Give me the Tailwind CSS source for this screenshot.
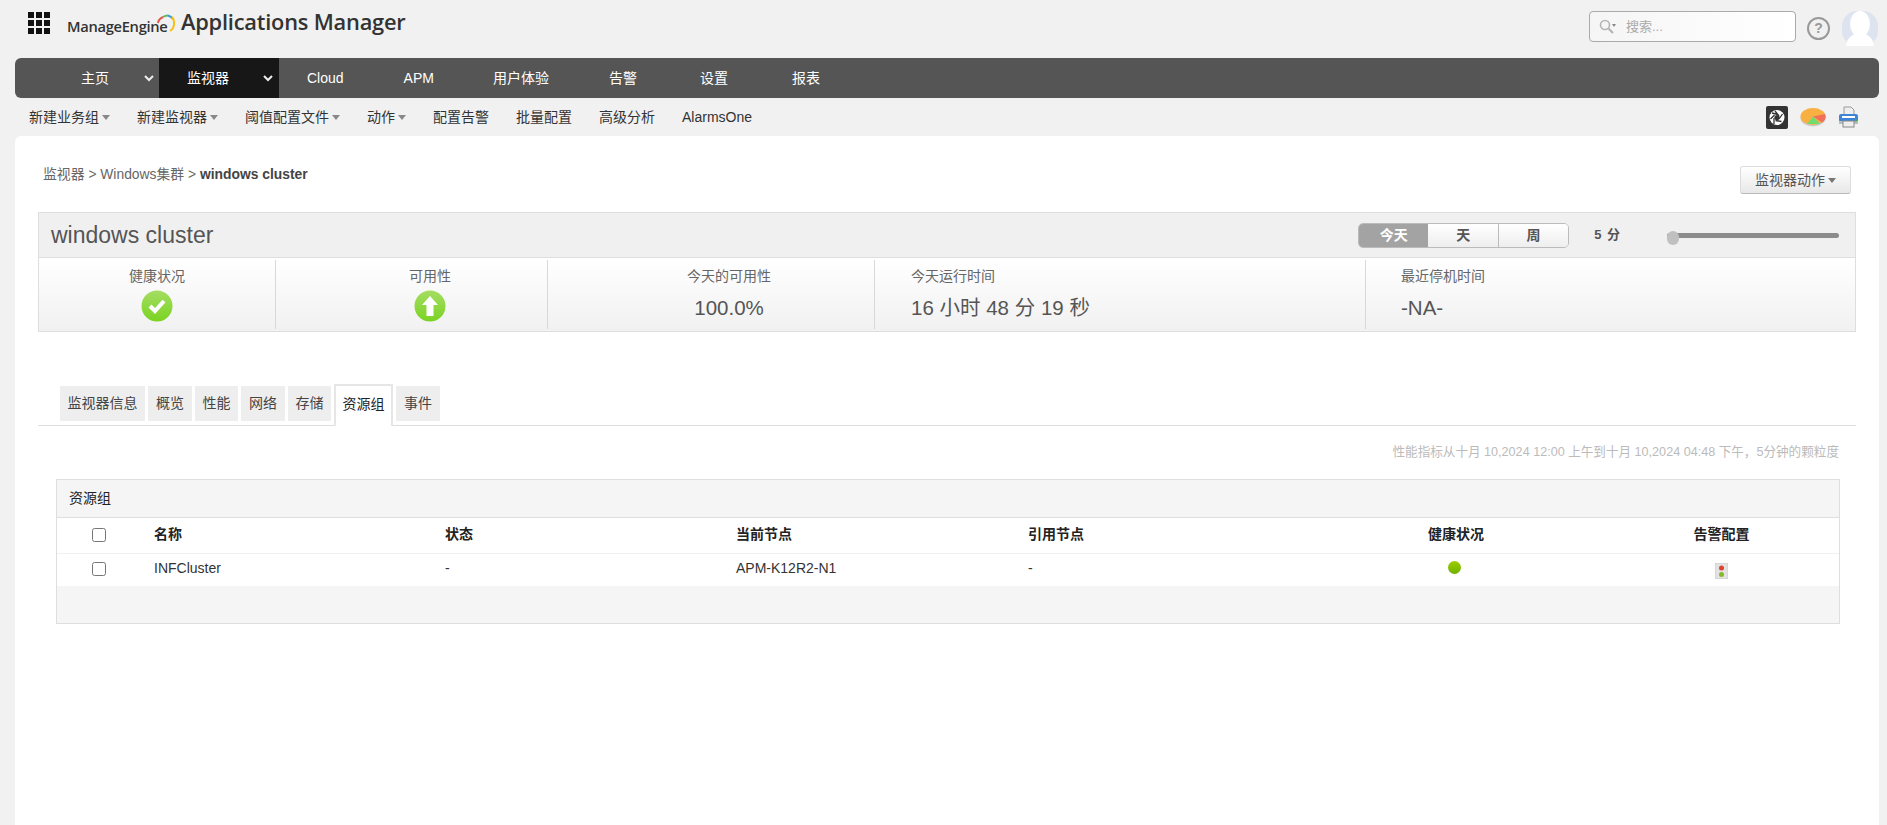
<!DOCTYPE html>
<html lang="zh-CN">
<head>
  <meta charset="UTF-8" />
  <title>Applications Manager</title>
  <script src="https://cdn.jsdelivr.net/npm/@tailwindcss/browser@4"></script>
</head>
<body class="bg-[#f1f1f1] h-[825px] overflow-hidden text-[14px] text-[#444] font-['Liberation_Sans','Noto_Sans_CJK_SC',sans-serif]">

  <!-- top bar -->
  <header class="h-[58px] flex items-start pl-[28px] pr-[9px]">
    <svg class="mt-[12px] w-[22px] h-[22px] shrink-0" viewBox="0 0 22 22" fill="#111">
      <rect x="0" y="0" width="6" height="6" /><rect x="8" y="0" width="6" height="6" /><rect x="16" y="0" width="6" height="6" />
      <rect x="0" y="8" width="6" height="6" /><rect x="8" y="8" width="6" height="6" /><rect x="16" y="8" width="6" height="6" />
      <rect x="0" y="16" width="6" height="6" /><rect x="8" y="16" width="6" height="6" /><rect x="16" y="16" width="6" height="6" />
    </svg>
    <div class="ml-[17px] mt-[12px] flex items-end h-[24px] relative">
      <span class="text-[14.7px] leading-[20px] text-[#333] font-semibold font-['Open_Sans',sans-serif] w-[114px] tracking-[-0.3px]">ManageEngine</span>
      <svg class="absolute left-[90px] top-[2px] w-[20px] h-[20px]" viewBox="0 0 20 20" fill="none" stroke-width="2">
        <path d="M1 9 A9 8 0 0 1 6 3" stroke="#e05a4a" />
        <path d="M6 3 A9 8 0 0 1 11 1.500" stroke="#5cb85c" />
        <path d="M11 1.500 A9 8 0 0 1 16 5" stroke="#3b9bd6" />
        <path d="M15 3 A8 9 0 0 1 13 17" stroke="#f2c21a" />
      </svg>
      <span class="text-[21.8px] leading-[28px] text-[#333] font-semibold font-['Open_Sans',sans-serif] tracking-[-0.2px]">Applications Manager</span>
    </div>
    <div class="ml-auto mt-[11px] flex items-start">
      <div class="w-[207px] h-[31px] border border-[#aaa] rounded-[4px] bg-gradient-to-r from-[#f5f5f5] to-white flex items-center pl-[9px] text-[13px] text-[#aaa]">
        <svg class="w-[18px] h-[16px] mr-[9px]" viewBox="0 0 18 16" fill="none" stroke="#b5b5b5">
          <circle cx="6" cy="6" r="4.500" stroke-width="1.600" />
          <path d="M9.500 9.500 L14 14" stroke-width="2.200" />
          <path d="M13 5 h4 l-2 3 z" fill="#888" stroke="none" />
        </svg>
        搜索...
      </div>
      <div class="ml-[11px] mt-[6px] w-[23px] h-[23px] rounded-full border-2 border-[#999] flex items-center justify-center text-[14px] font-bold text-[#999]">?</div>
      <svg class="ml-[12px] w-[36px] h-[35px]" viewBox="0 0 36 35">
        <rect width="36" height="35" rx="15" fill="#dde3ef" />
        <ellipse cx="18" cy="13" rx="10" ry="13" fill="#fff" />
        <path d="M4 35 C5 25 12 24 14 22 H22 C24 24 31 25 32 35 Z" fill="#fff" />
      </svg>
    </div>
  </header>

  <!-- main nav -->
  <nav class="ml-[15px] mr-[8px] h-[40px] bg-[#555] rounded-[6px] flex items-center text-white overflow-hidden">
    <a class="w-[144px] h-full flex items-center pl-[66px]">主页
      <svg class="ml-[35px] w-[10px] h-[7px]" viewBox="0 0 10 7" fill="none" stroke="#eee" stroke-width="2"><path d="M1 1 L5 5 L9 1" /></svg>
    </a>
    <a class="w-[120px] h-full bg-[#171717] flex items-center pl-[28px]">监视器
      <svg class="ml-[34px] w-[10px] h-[7px]" viewBox="0 0 10 7" fill="none" stroke="#eee" stroke-width="2"><path d="M1 1 L5 5 L9 1" /></svg>
    </a>
    <a class="pl-[28px] pr-[30px]">Cloud</a>
    <a class="pl-[30px] pr-[29px]">APM</a>
    <a class="pl-[30px] pr-[29px]">用户体验</a>
    <a class="px-[31px]">告警</a>
    <a class="px-[32px]">设置</a>
    <a class="px-[32px]">报表</a>
  </nav>

  <!-- sub nav -->
  <div class="h-[38px] pl-[29px] pr-[28px] flex items-center gap-[27px] text-[#333]">
    <a class="flex items-center">新建业务组<i class="ml-[3px] mt-[1px] border-x-[4px] border-x-transparent border-t-[5px] border-t-[#888]"></i></a>
    <a class="flex items-center">新建监视器<i class="ml-[3px] mt-[1px] border-x-[4px] border-x-transparent border-t-[5px] border-t-[#888]"></i></a>
    <a class="flex items-center">阈值配置文件<i class="ml-[3px] mt-[1px] border-x-[4px] border-x-transparent border-t-[5px] border-t-[#888]"></i></a>
    <a class="flex items-center">动作<i class="ml-[3px] mt-[1px] border-x-[4px] border-x-transparent border-t-[5px] border-t-[#888]"></i></a>
    <a>配置告警</a>
    <a>批量配置</a>
    <a>高级分析</a>
    <a>AlarmsOne</a>
    <div class="ml-auto flex items-center gap-[12px]">
      <svg class="w-[22px] h-[23px]" viewBox="0 0 22 23">
        <rect width="22" height="23" rx="2" fill="#333" />
        <circle cx="11" cy="11.500" r="7.500" fill="#fff" />
        <circle cx="11" cy="11.500" r="2.600" fill="#333" />
        <path d="M9 5 L13 10 M16.500 8 L13 13 M15.500 15.500 L9.500 14.500 M8 18 L8 12 M4.500 13 L8.500 9 M6 7 L12 8.500" stroke="#333" stroke-width="1.300" />
      </svg>
      <svg class="w-[26px] h-[20px]" viewBox="0 0 26 20">
        <ellipse cx="13" cy="11" rx="12.500" ry="8.500" fill="#ccc" />
        <ellipse cx="13" cy="9.500" rx="12.500" ry="8.500" fill="#f9b042" />
        <path d="M13 9.500 L25 7 A12.500 8.500 0 0 1 22 15.500 Z" fill="#f0705a" />
        <path d="M13 9.500 L20 17 L7 17 Z" fill="#6fdc6f" />
      </svg>
      <svg class="w-[21px] h-[22px]" viewBox="0 0 21 22">
        <path d="M6 1 H13 L16 4 V10 H6 Z" fill="#eee" stroke="#999" />
        <rect x="1" y="8" width="19" height="8" rx="2" fill="#3d84d6" />
        <rect x="4" y="10" width="13" height="2" fill="#fff" />
        <rect x="1" y="15" width="19" height="3" fill="#bbb" />
        <rect x="5" y="15" width="11" height="6" fill="#eee" stroke="#888" />
        <circle cx="18" cy="14.500" r="1.200" fill="#4caf50" />
      </svg>
    </div>
  </div>

  <!-- content card -->
  <main class="ml-[15px] mr-[8px] h-[689px] bg-white rounded-t-[6px] px-[23px]">
    <div class="h-[76px] flex items-start justify-between">
      <p class="mt-[28px] ml-[5px] text-[13.85px] text-[#666]">监视器 &gt; Windows集群 &gt; <b class="text-[#444]">windows cluster</b></p>
      <button class="mt-[30px] mr-[5px] w-[111px] h-[28px] border border-[#ddd] border-b-[#bbb] rounded-[3px] bg-gradient-to-b from-white to-[#e8e8e8] flex items-center justify-center text-[#555]">监视器动作<i class="ml-[3px] border-x-[4px] border-x-transparent border-t-[5px] border-t-[#777]"></i></button>
    </div>

    <!-- summary panel -->
    <section class="border border-[#dedede] h-[120px]">
      <div class="h-[45px] bg-[#f0f0f0] border-b border-[#dedede] flex items-center pl-[12px] pr-[16px]">
        <h1 class="text-[23px] text-[#555]">windows cluster</h1>
        <div class="ml-auto w-[211px] h-[25px] flex border border-[#bbb] rounded-[5px] overflow-hidden font-bold text-[#555]">
          <span class="flex-1 bg-[#a3a3a3] text-white flex items-center justify-center">今天</span>
          <span class="flex-1 bg-gradient-to-b from-white to-[#eee] border-r border-[#bbb] flex items-center justify-center">天</span>
          <span class="flex-1 bg-gradient-to-b from-white to-[#eee] flex items-center justify-center">周</span>
        </div>
        <span class="ml-[25px] text-[13px] font-bold text-[#555] tracking-[1px]">5 分</span>
        <div class="ml-[46px] relative w-[172px] h-[5px] bg-[#8c8c8c] rounded-full">
          <i class="absolute left-0 top-[-2px] w-[12px] h-[14px] rounded-full bg-[#c0c0c0]"></i>
        </div>
      </div>
      <div class="h-[73px] py-[2px] grid grid-cols-[237px_272px_327px_491px_1fr] bg-gradient-to-b from-white to-[#f1f1f1]">
        <div class="border-r border-[#d8d8d8] flex flex-col items-center pt-[6px]">
          <span class="leading-[20px] text-[#666]">健康状况</span>
          <svg class="mt-[4px] w-[32px] h-[32px]" viewBox="0 0 32 32">
            <defs>
              <linearGradient id="okGreen" x1="0" y1="0" x2="0" y2="1"><stop offset="0" stop-color="#a5dd63" /><stop offset="1" stop-color="#7ad321" /></linearGradient>
            </defs>
            <circle cx="16" cy="16" r="15.500" fill="url(#okGreen)" />
            <path d="M9 16 L14 21 L23 11" fill="none" stroke="#fff" stroke-width="4" />
          </svg>
        </div>
        <div class="border-r border-[#d8d8d8] flex flex-col items-center pl-[37px] pt-[6px]">
          <span class="leading-[20px] text-[#666]">可用性</span>
          <svg class="mt-[4px] w-[32px] h-[32px]" viewBox="0 0 32 32">
            <circle cx="16" cy="16" r="15.500" fill="url(#okGreen)" />
            <path d="M16 6 L24 15 H19.500 V26 H12.500 V15 H8 Z" fill="#fff" />
          </svg>
        </div>
        <div class="border-r border-[#d8d8d8] flex flex-col items-center pl-[36px] pt-[6px]">
          <span class="leading-[20px] text-[#666]">今天的可用性</span>
          <span class="mt-[9px] text-[20.5px] leading-[26px] text-[#555]">100.0%</span>
        </div>
        <div class="border-r border-[#d8d8d8] flex flex-col pl-[36px] pt-[6px]">
          <span class="leading-[20px] text-[#666]">今天运行时间</span>
          <span class="mt-[9px] text-[20.5px] leading-[26px] text-[#555]">16 小时 48 分 19 秒</span>
        </div>
        <div class="flex flex-col pl-[35px] pt-[6px]">
          <span class="leading-[20px] text-[#666]">最近停机时间</span>
          <span class="mt-[9px] text-[20.5px] leading-[26px] text-[#555]">-NA-</span>
        </div>
      </div>
    </section>

    <!-- tabs -->
    <div class="mt-[52px] h-[42px] border-b border-[#dedede] pl-[22px] flex items-start gap-[3px]">
      <a class="mt-[2px] h-[35px] w-[85px] bg-[#eee] flex items-center justify-center">监视器信息</a>
      <a class="mt-[2px] h-[35px] w-[44px] bg-[#eee] flex items-center justify-center">概览</a>
      <a class="mt-[2px] h-[35px] w-[43px] bg-[#eee] flex items-center justify-center">性能</a>
      <a class="mt-[2px] h-[35px] w-[44px] bg-[#eee] flex items-center justify-center">网络</a>
      <a class="mt-[2px] h-[35px] w-[43px] bg-[#eee] flex items-center justify-center">存储</a>
      <a class="h-[42px] w-[59px] bg-white border-2 border-b-0 border-[#e6e6e6] flex items-center justify-center pb-[3px] text-[#222]">资源组</a>
      <a class="mt-[2px] h-[35px] w-[44px] bg-[#eee] flex items-center justify-center">事件</a>
    </div>

    <p class="mt-[17px] pr-[17px] text-right text-[12.6px] leading-[18px] text-[#bbb]">性能指标从十月 10,2024 12:00 上午到十月 10,2024 04:48 下午，5分钟的颗粒度</p>

    <!-- resource group table -->
    <section class="mt-[18px] ml-[18px] mr-[16px] border border-[#dedede] text-[#333]">
      <div class="h-[38px] bg-[#f5f5f5] border-b border-[#dedede] flex items-center pl-[12px] text-[#222]">资源组</div>
      <div class="h-[36px] pb-[2px] grid grid-cols-[97px_291px_291px_292px_280px_296px_1fr] items-center border-b border-[#f0f0f0] font-bold text-[#222]">
        <span class="flex justify-center"><input type="checkbox" class="w-[14px] h-[14px] ml-[-14px]" /></span>
        <span>名称</span>
        <span>状态</span>
        <span>当前节点</span>
        <span>引用节点</span>
        <span class="text-center">健康状况</span>
        <span class="text-center">告警配置</span>
      </div>
      <div class="h-[32px] pb-[3px] grid grid-cols-[97px_291px_291px_292px_280px_296px_1fr] items-center">
        <span class="flex justify-center"><input type="checkbox" class="w-[14px] h-[14px] ml-[-14px]" /></span>
        <span>INFCluster</span>
        <span>-</span>
        <span>APM-K12R2-N1</span>
        <span>-</span>
        <span class="flex justify-center mt-[-3px] pr-[4px]"><i class="w-[13px] h-[13px] rounded-full bg-gradient-to-b from-[#9ccf00] to-[#6fb000]"></i></span>
        <span class="flex justify-center mt-[4px]">
          <svg class="w-[13px] h-[16px]" viewBox="0 0 13 16">
            <rect width="13" height="16" fill="#e2e2e2" stroke="#ccc" />
            <circle cx="6.500" cy="5" r="2.500" fill="#e0402e" />
            <circle cx="6.500" cy="11.500" r="2.500" fill="#86b92a" />
          </svg>
        </span>
      </div>
      <div class="h-[37px] bg-[#f5f5f5]"></div>
    </section>
  </main>
</body>
</html>
